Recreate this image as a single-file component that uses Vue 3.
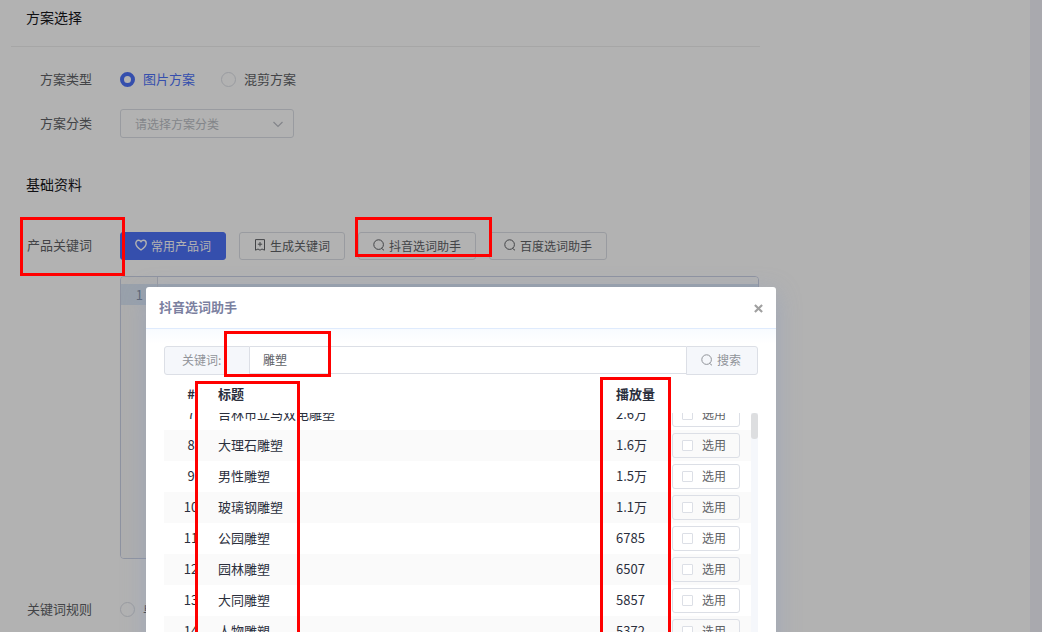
<script setup>
import { ref } from 'vue'

const planType = ref('image')
const category = ref('')
const rule = ref('')
const words = ref('')
const keyword = ref('雕塑')
const rows = ref([
  { id: 7, title: '吉林市立马双电雕塑', views: '2.6万', picked: false },
  { id: 8, title: '大理石雕塑', views: '1.6万', picked: false },
  { id: 9, title: '男性雕塑', views: '1.5万', picked: false },
  { id: 10, title: '玻璃钢雕塑', views: '1.1万', picked: false },
  { id: 11, title: '公园雕塑', views: '6785', picked: false },
  { id: 12, title: '园林雕塑', views: '6507', picked: false },
  { id: 13, title: '大同雕塑', views: '5857', picked: false },
  { id: 14, title: '人物雕塑', views: '5372', picked: false },
])
</script>

<template>
  <div class="page">
    <main class="content">
      <form class="form" @submit.prevent>
        <h2 class="section-title ruled">方案选择</h2>
        <div class="row first">
          <span class="label">方案类型</span>
          <label class="radio"><input v-model="planType" type="radio" name="plan" value="image" /><span>图片方案</span></label>
          <label class="radio"><input v-model="planType" type="radio" name="plan" value="mix" /><span>混剪方案</span></label>
        </div>
        <div class="row second">
          <label class="label" for="category">方案分类</label>
          <div class="select-box">
            <select id="category" v-model="category">
              <option value="">请选择方案分类</option>
            </select>
            <svg class="chevron" viewBox="0 0 12 12"><path d="M1.500 4l4.500 4.500L10.500 4" /></svg>
          </div>
        </div>

        <h2 class="section-title basic">基础资料</h2>
        <div class="row tools">
          <label class="label" for="words">产品关键词</label>
          <div class="buttons">
            <button type="button" class="btn primary">
              <svg class="icon heart" viewBox="0 0 12 12"><path d="M6 11C3.600 9.400.8 7.100.8 4.300.8 2.500 2 1.300 3.600 1.300 4.700 1.300 5.500 1.900 6 2.700 6.500 1.900 7.300 1.300 8.400 1.300 10 1.300 11.200 2.500 11.200 4.300 11.200 7.100 8.400 9.400 6 11z" /></svg>常用产品词
            </button>
            <button type="button" class="btn">
              <svg class="icon" viewBox="0 0 12 12"><path d="M1.500 .6h9v10.600L8 10l-2 1.200L4 10l-2.500 1.200zM6 3v4.400M3.800 5.200h4.400" /></svg>生成关键词
            </button>
            <button type="button" class="btn">
              <svg class="icon" viewBox="0 0 12 12"><circle cx="5.600" cy="5.600" r="4.800" /><path d="M8.600 9.400l2.400 1.900" /></svg>抖音选词助手
            </button>
            <button type="button" class="btn">
              <svg class="icon" viewBox="0 0 12 12"><circle cx="5.600" cy="5.600" r="4.800" /><path d="M8.600 9.400l2.400 1.900" /></svg>百度选词助手
            </button>
          </div>
        </div>
        <div class="editor">
          <div class="gutter"><span class="line-no">1</span></div>
          <textarea id="words" v-model="words"></textarea>
        </div>
        <div class="row rules">
          <span class="label">关键词规则</span>
          <label class="radio"><input v-model="rule" type="radio" name="rule" value="single" /><span>单</span></label>
        </div>
      </form>
    </main>

    <div class="mask"></div>

    <section class="dialog" role="dialog" aria-labelledby="dialog-title">
      <header class="dialog-head">
        <h3 id="dialog-title">抖音选词助手</h3>
        <button type="button" class="close" aria-label="关闭">
          <svg viewBox="0 0 10 10"><path d="M1 1l8 8M9 1L1 9" /></svg>
        </button>
      </header>
      <div class="dialog-body">
        <div class="search">
          <label for="keyword" class="prepend">关键词:</label>
          <input id="keyword" v-model="keyword" type="text" />
          <button type="button" class="append">
            <svg class="icon" viewBox="0 0 12 12"><circle cx="5.600" cy="5.600" r="4.800" /><path d="M8.600 9.400l2.400 1.900" /></svg>搜索
          </button>
        </div>
        <div class="grid-head">
          <table>
            <colgroup><col class="c-no" /><col /><col class="c-views" /><col class="c-pick" /></colgroup>
            <thead>
              <tr><th class="no">#</th><th>标题</th><th>播放量</th><th></th></tr>
            </thead>
          </table>
        </div>
        <div class="grid-body">
          <table>
            <colgroup><col class="c-no" /><col /><col class="c-views" /><col class="c-pick" /></colgroup>
            <tbody>
              <tr v-for="row in rows" :key="row.id">
                <td class="no">{{ row.id }}</td>
                <td>{{ row.title }}</td>
                <td>{{ row.views }}</td>
                <td class="action">
                  <label class="pick"><input v-model="row.picked" type="checkbox" /><span>选用</span></label>
                </td>
              </tr>
            </tbody>
          </table>
          <div class="track"><div class="thumb"></div></div>
        </div>
      </div>
    </section>

    <div class="mark mark-label"></div>
    <div class="mark mark-button"></div>
    <div class="mark mark-keyword"></div>
    <div class="mark mark-title"></div>
    <div class="mark mark-views"></div>
  </div>
</template>

<style>
body {
  overflow: hidden;
}
</style>

<style scoped>
.page,
.page * {
  box-sizing: border-box;
}
.page {
  position: relative;
  height: 100vh;
  overflow: hidden;
  padding-right: 12px;
  background: #f2f3f9;
  color: #606266;
  font: 13px/20px "Noto Sans CJK SC", sans-serif;
}
button,
input,
select,
textarea {
  margin: 0;
  font-family: inherit;
  color: inherit;
}
.content {
  min-height: 100%;
  padding: 0 11px;
  background: #fff;
}
.form {
  max-width: 749px;
}
.section-title {
  margin: 0;
  padding: 0 0 2px 15px;
  font-size: 14px;
  font-weight: 400;
  line-height: 34px;
  color: #17181c;
}
.ruled {
  padding-bottom: 12px;
  border-bottom: 1px solid #eeeeee;
}
.basic {
  margin-top: 29px;
}
.row {
  display: flex;
  align-items: center;
  min-height: 29px;
}
.first {
  margin-top: 18px;
}
.second {
  margin-top: 15px;
}
.tools {
  margin-top: 29px;
  min-height: 28px;
}
.rules {
  margin-top: 36px;
}
.label {
  flex: none;
  width: 109px;
  padding: 0 28px 2px 0;
  text-align: right;
}
.radio {
  display: flex;
  align-items: center;
  gap: 8px;
  margin-right: 26px;
}
.radio span,
.pick span {
  padding-bottom: 2px;
}
.radio input {
  appearance: none;
  width: 15px;
  height: 15px;
  border: 1px solid #dcdfe6;
  border-radius: 50%;
  background: #fff;
}
.radio input:checked {
  border: 4px solid #4d71f8;
}
.radio input:checked + span {
  color: #4d71f8;
}
.select-box {
  position: relative;
  width: 174px;
}
.select-box select {
  appearance: none;
  display: block;
  width: 100%;
  height: 29px;
  padding: 0 30px 1px 14px;
  border: 1px solid #dcdfe6;
  border-radius: 3px;
  background: #fff;
  color: #bcbfc6;
  font-size: 12px;
}
.chevron {
  position: absolute;
  top: 9px;
  right: 10px;
  width: 12px;
  height: 12px;
  fill: none;
  stroke: #bcbfc6;
  stroke-width: 1.2;
}
.buttons {
  display: flex;
  gap: 13px;
}
.btn {
  display: flex;
  align-items: center;
  gap: 4px;
  height: 28px;
  padding: 0 14px 2px;
  border: 1px solid #dcdfe6;
  border-radius: 3px;
  background: #fff;
  font-size: 12px;
  white-space: nowrap;
}
.primary {
  border-color: #4d71f8;
  background: #4d71f8;
  color: #fff;
}
.icon {
  flex: none;
  width: 12px;
  height: 12px;
  fill: none;
  stroke: currentColor;
}
.heart {
  stroke-width: 1.4;
}
.editor {
  display: flex;
  height: 283px;
  margin: 16px 1px 0 109px;
  border: 1px solid #ccd3e6;
  border-radius: 4px;
  overflow: hidden;
}
.gutter {
  width: 37px;
  padding-top: 7px;
  border-right: 1px solid #d8dbe6;
  background: #fafafa;
}
.line-no {
  display: block;
  padding-right: 14px;
  background: #dbe7f5;
  color: #8391a8;
  line-height: 21px;
  text-align: right;
}
.editor textarea {
  flex: 1;
  resize: none;
  border: 0;
  outline: 0;
  padding: 7px 8px;
  background: linear-gradient(#dbe7f5, #dbe7f5) 0 7px / 100% 21px no-repeat #fff;
}
.mask {
  position: absolute;
  inset: 0;
  background: rgba(0, 0, 0, 0.3);
}
.dialog {
  position: absolute;
  top: 287px;
  left: 146px;
  width: 630px;
  border-radius: 3px;
  background: #fff;
  box-shadow: 0 6px 24px rgba(130, 150, 195, 0.4);
}
.dialog-head {
  display: flex;
  align-items: center;
  justify-content: space-between;
  height: 42px;
  padding: 0 13px 2px;
  border-bottom: 1px solid #dfebfd;
}
.dialog-head h3 {
  margin: 0;
  font-size: 13px;
  font-weight: 700;
  color: #7b80a0;
}
.close {
  display: flex;
  padding: 4px 0 0;
  border: 0;
  background: none;
}
.close svg {
  width: 9px;
  height: 9px;
  fill: none;
  stroke: #a0a0a0;
  stroke-width: 2.4;
}
.dialog-body {
  padding: 17px 18px 20px;
  background: linear-gradient(#f8fbff, #fff 15px);
}
.search {
  display: flex;
  height: 29px;
  font-size: 12px;
}
.prepend,
.append {
  display: flex;
  align-items: center;
  border: 1px solid #dcdfe6;
  background: #f5f7fb;
  color: #909399;
}
.prepend {
  width: 86px;
  padding: 0 0 2px 17px;
  border-radius: 3px 0 0 3px;
}
.search input {
  flex: 1;
  min-width: 0;
  height: 28px;
  padding: 0 13px 1px;
  border: 1px solid #dcdfe6;
  border-width: 1px 0;
  outline: 0;
  background: #fff;
  font-size: 12px;
}
.append {
  gap: 4px;
  width: 72px;
  padding: 0 14px 2px;
  border-radius: 0 3px 3px 0;
  font-size: 12px;
}
.grid-head {
  padding: 4px 7px 3px 0;
}
table {
  flex: 1;
  width: 100%;
  table-layout: fixed;
  border-collapse: collapse;
  color: #2b2f3d;
}
.c-no {
  width: 54px;
}
.c-views {
  width: 56px;
}
.c-pick {
  width: 79px;
}
th,
td {
  height: 31px;
  padding: 0 0 2px;
  text-align: left;
  white-space: nowrap;
}
th {
  font-weight: 700;
}
.no {
  text-align: center;
}
.action {
  padding: 0;
}
tbody tr:nth-child(even) {
  background: #fafafa;
}
.grid-body {
  display: flex;
  overflow: hidden;
}
.grid-body table {
  margin-top: -14px;
}
.track {
  flex: none;
  width: 7px;
  background: #f5f7fb;
}
.thumb {
  height: 26px;
  border-radius: 3px;
  background: #dddee0;
}
.pick {
  display: flex;
  align-items: center;
  gap: 9px;
  width: 68px;
  height: 25px;
  padding: 0 9px;
  border: 1px solid #dcdfe6;
  border-radius: 3px;
  color: #606266;
  font-size: 12px;
}
.pick input {
  appearance: none;
  width: 11px;
  height: 11px;
  border: 1px solid #dcdfe6;
  border-radius: 1px;
  background: #fff;
}
.mark {
  position: absolute;
  border: 3px solid #f00;
  pointer-events: none;
}
.mark-label {
  top: 217px;
  left: 20px;
  width: 105px;
  height: 59px;
}
.mark-button {
  top: 217px;
  left: 355px;
  width: 137px;
  height: 40px;
}
.mark-keyword {
  top: 331px;
  left: 224px;
  width: 107px;
  height: 46px;
}
.mark-title {
  top: 381px;
  left: 195px;
  width: 105px;
  height: 260px;
}
.mark-views {
  top: 377px;
  left: 600px;
  width: 71px;
  height: 264px;
}
</style>
